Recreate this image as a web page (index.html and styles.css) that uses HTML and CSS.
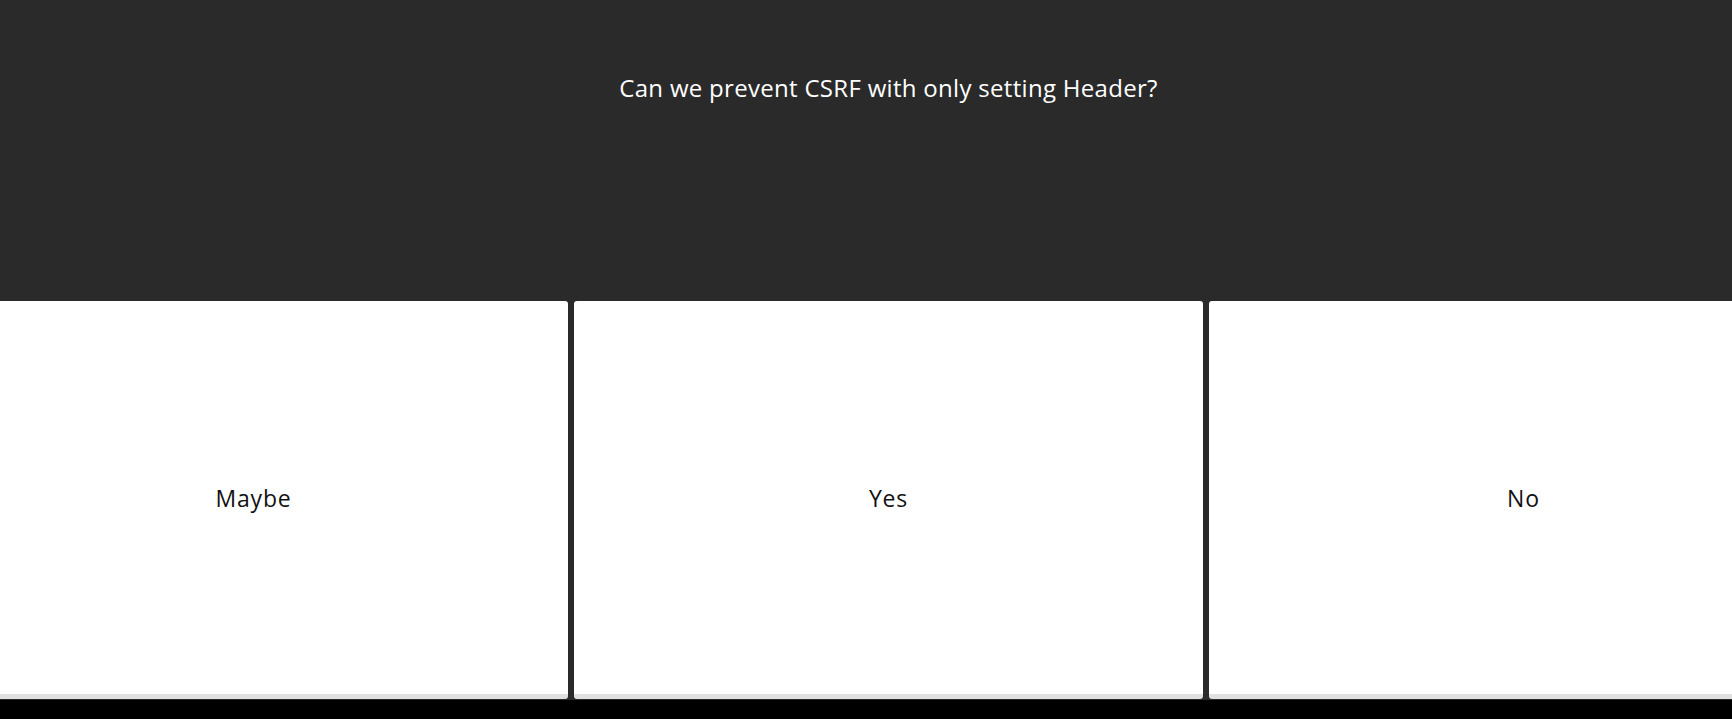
FILE: index.html
```html
<!DOCTYPE html>
<html>
<head>
<meta charset="utf-8">
<link rel="stylesheet" href="styles.css">
</head>
<body>
<div class="stage">
  <div class="track">
    <header class="question">
      <h1 class="question-text">Can we prevent CSRF with only setting Header?</h1>
    </header>
    <div class="answers">
      <div class="card">Maybe</div>
      <div class="card">Yes</div>
      <div class="card">No</div>
    </div>
  </div>
</div>
</body>
</html>
```
FILE: styles.css
```css
html, body {
  margin: 0;
  padding: 0;
  background: #000;
  overflow: hidden;
  font-family: "Open Sans", "Noto Sans", sans-serif;
}
.stage {
  background: #2a2a2a;
  height: 700px;
  overflow: hidden;
}
.track {
  width: 1899px;
  margin-left: -61px;
}
.question {
  height: 301px;
  display: flex;
  justify-content: center;
}
.question-text {
  margin: 0;
  padding-top: 71px;
  font-size: 24px;
  font-weight: 400;
  line-height: 34px;
  letter-spacing: 0.3px;
  color: #fff;
}
.answers {
  display: flex;
  gap: 6px;
}
.card {
  flex: 0 0 629px;
  height: 393px;
  background: #fff;
  border-radius: 3px;
  border-bottom: 5px solid #e0e0e0;
  display: flex;
  align-items: center;
  justify-content: center;
  font-size: 23px;
  letter-spacing: 0.8px;
  color: #111;
}
```
